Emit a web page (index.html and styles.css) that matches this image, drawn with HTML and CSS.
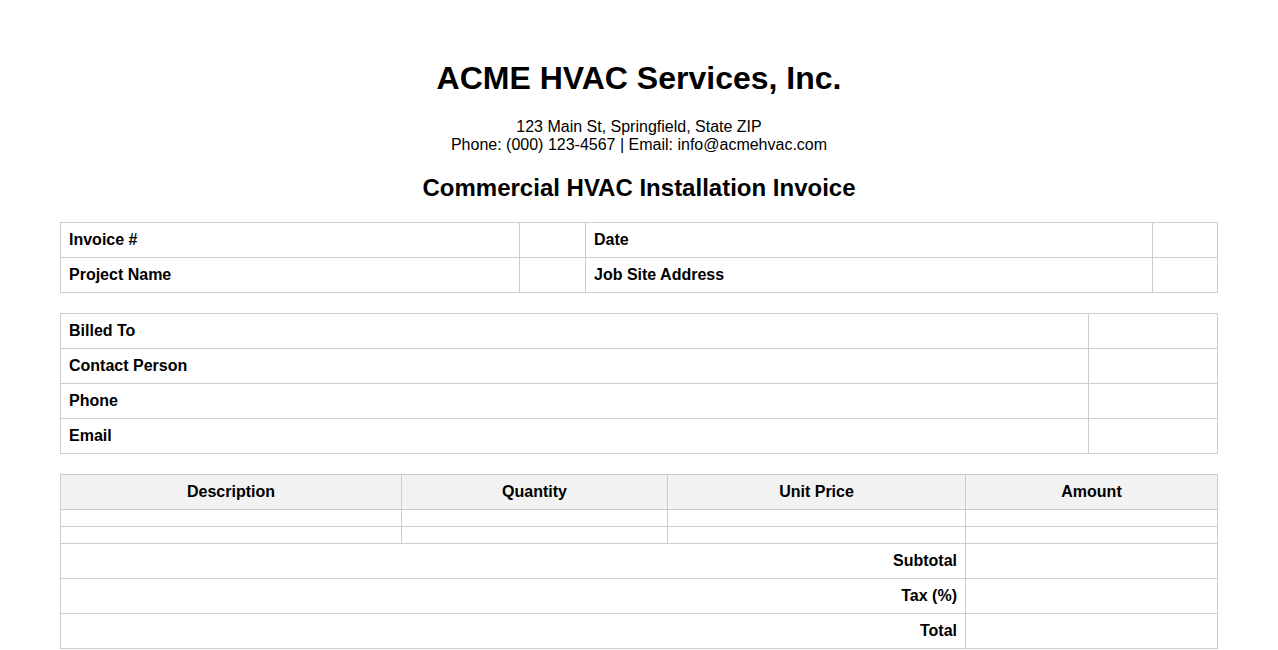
FILE: index.html
```html
<!DOCTYPE html>
<html lang="en">
<head>
<meta charset="utf-8">
<title>Commercial HVAC Installation Invoice</title>
<link rel="stylesheet" href="styles.css">
</head>
<body>
<div class="page">
  <header class="header">
    <h1 class="company">ACME HVAC Services, Inc.</h1>
    <p class="contact">123 Main St, Springfield, State ZIP<br>Phone: (000) 123-4567 | Email: info@acmehvac.com</p>
    <h2 class="doc-title">Commercial HVAC Installation Invoice</h2>
  </header>

  <table class="grid info">
    <colgroup>
      <col class="c-lbl1"><col class="c-val1"><col class="c-lbl2"><col class="c-val2">
    </colgroup>
    <tr><th>Invoice #</th><td></td><th>Date</th><td></td></tr>
    <tr><th>Project Name</th><td></td><th>Job Site Address</th><td></td></tr>
  </table>

  <table class="grid billing">
    <colgroup><col class="c-blbl"><col class="c-bval"></colgroup>
    <tr><th>Billed To</th><td></td></tr>
    <tr><th>Contact Person</th><td></td></tr>
    <tr><th>Phone</th><td></td></tr>
    <tr><th>Email</th><td></td></tr>
  </table>

  <table class="grid items">
    <colgroup>
      <col class="c-desc"><col class="c-qty"><col class="c-price"><col class="c-amt">
    </colgroup>
    <thead>
      <tr class="head"><th>Description</th><th>Quantity</th><th>Unit Price</th><th>Amount</th></tr>
    </thead>
    <tbody>
      <tr class="empty"><td></td><td></td><td></td><td></td></tr>
      <tr class="empty"><td></td><td></td><td></td><td></td></tr>
      <tr class="sum"><th colspan="3">Subtotal</th><td></td></tr>
      <tr class="sum"><th colspan="3">Tax (%)</th><td></td></tr>
      <tr class="sum"><th colspan="3">Total</th><td></td></tr>
    </tbody>
  </table>
</div>
</body>
</html>
```

FILE: styles.css
```css
html, body {
  margin: 0;
  padding: 0;
  background: #fff;
}

body {
  font-family: "Liberation Sans", Arial, sans-serif;
  font-size: 16px;
  color: #000;
}

.page {
  padding: 39px 60px 20px;
}

.header {
  text-align: center;
}

.company {
  font-size: 32px;
  font-weight: bold;
  margin: 21px 0 21px;
}

.contact {
  margin: 0;
  line-height: normal;
}

.doc-title {
  font-size: 24px;
  font-weight: bold;
  margin: 20px 0 20px;
}

.grid {
  width: 100%;
  border-collapse: collapse;
  table-layout: fixed;
  margin-bottom: 20px;
}

.grid th,
.grid td {
  border: 1px solid #ccc;
  padding: 8px;
  text-align: left;
  font-weight: bold;
  vertical-align: middle;
}

.grid td {
  font-weight: normal;
}

.c-lbl1 { width: 459px; }
.c-val1 { width: 66px; }
.c-lbl2 { width: 567px; }
.c-val2 { width: 65px; }

.c-blbl { width: 1028px; }
.c-bval { width: 129px; }

.c-desc { width: 341px; }
.c-qty { width: 266px; }
.c-price { width: 298px; }
.c-amt { width: 252px; }

.items .head th {
  background: #f2f2f2;
  text-align: center;
}

.items .sum th {
  text-align: right;
}
```
